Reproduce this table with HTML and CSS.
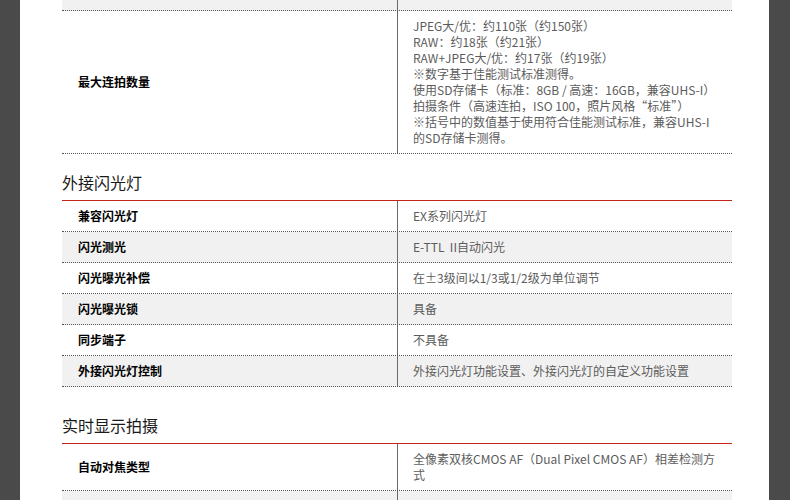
FILE: index.html
```html
<!DOCTYPE html>
<html lang="zh-CN">
<head>
<meta charset="utf-8">
<title>规格</title>
<link rel="stylesheet" href="styles.css">
</head>
<body>
<div class="page">
  <div class="spec spec-first">
    <div class="row row-alt row-cut">
      <div class="label"></div>
      <div class="value"></div>
    </div>
    <div class="row">
      <div class="label">最大连拍数量</div>
      <div class="value">JPEG大/优：约110张（约150张）<br>RAW：约18张（约21张）<br>RAW+JPEG大/优：约17张（约19张）<br>※数字基于佳能测试标准测得。<br>使用SD存储卡（标准：8GB / 高速：16GB，兼容UHS-I）<br>拍摄条件（高速连拍，ISO 100，照片风格“标准”）<br>※括号中的数值基于使用符合佳能测试标准，兼容UHS-I<br>的SD存储卡测得。</div>
    </div>
  </div>

  <h2 class="section-title title-flash">外接闪光灯</h2>
  <div class="spec spec-red">
    <div class="row">
      <div class="label">兼容闪光灯</div>
      <div class="value">EX系列闪光灯</div>
    </div>
    <div class="row row-alt">
      <div class="label">闪光测光</div>
      <div class="value">E-TTL&nbsp; II自动闪光</div>
    </div>
    <div class="row">
      <div class="label">闪光曝光补偿</div>
      <div class="value">在±3级间以1/3或1/2级为单位调节</div>
    </div>
    <div class="row row-alt">
      <div class="label">闪光曝光锁</div>
      <div class="value">具备</div>
    </div>
    <div class="row">
      <div class="label">同步端子</div>
      <div class="value">不具备</div>
    </div>
    <div class="row row-alt">
      <div class="label">外接闪光灯控制</div>
      <div class="value">外接闪光灯功能设置、外接闪光灯的自定义功能设置</div>
    </div>
  </div>

  <h2 class="section-title title-live">实时显示拍摄</h2>
  <div class="spec spec-red">
    <div class="row">
      <div class="label">自动对焦类型</div>
      <div class="value">全像素双核CMOS AF（Dual Pixel CMOS AF）相差检测方<br>式</div>
    </div>
    <div class="row row-alt">
      <div class="label"></div>
      <div class="value"></div>
    </div>
  </div>
</div>
</body>
</html>
```
FILE: styles.css
```css
html, body {
  margin: 0;
  padding: 0;
}
body {
  background: #4a4a4a;
  font-family: "Noto Sans CJK SC", "Noto Sans", sans-serif;
}
.page {
  width: 749px;
  margin: 0 0 0 20px;
  min-height: 500px;
  background: #ffffff;
  padding: 0 37px 20px 42px;
  box-sizing: border-box;
  overflow: hidden;
}
.spec {
  width: 670px;
}
.spec-red {
  border-top: 1px solid #c4231c;
}
.row {
  display: grid;
  grid-template-columns: 336px 334px;
  border-bottom: 1px dotted #555;
}
.row-alt {
  background: #f1f1f1;
}
.label {
  box-sizing: border-box;
  border-right: 1px solid #6a6a6a;
  padding: 7px 0 7px 16px;
  display: flex;
  align-items: center;
  font-size: 12px;
  line-height: 16px;
  font-weight: 700;
  color: #000;
}
.value {
  align-self: center;
  padding: 7px 12px 7px 15px;
  font-size: 12px;
  line-height: 16px;
  color: #5c5c5c;
}
.row-cut .label,
.row-cut .value {
  padding: 0;
  height: 10px;
}
.section-title {
  margin: 0;
  height: 36px;
  line-height: 36px;
  font-size: 16px;
  font-weight: 400;
  color: #1a1a1a;
}
.title-flash {
  margin-top: 10px;
}
.title-live {
  margin-top: 20px;
}
```
